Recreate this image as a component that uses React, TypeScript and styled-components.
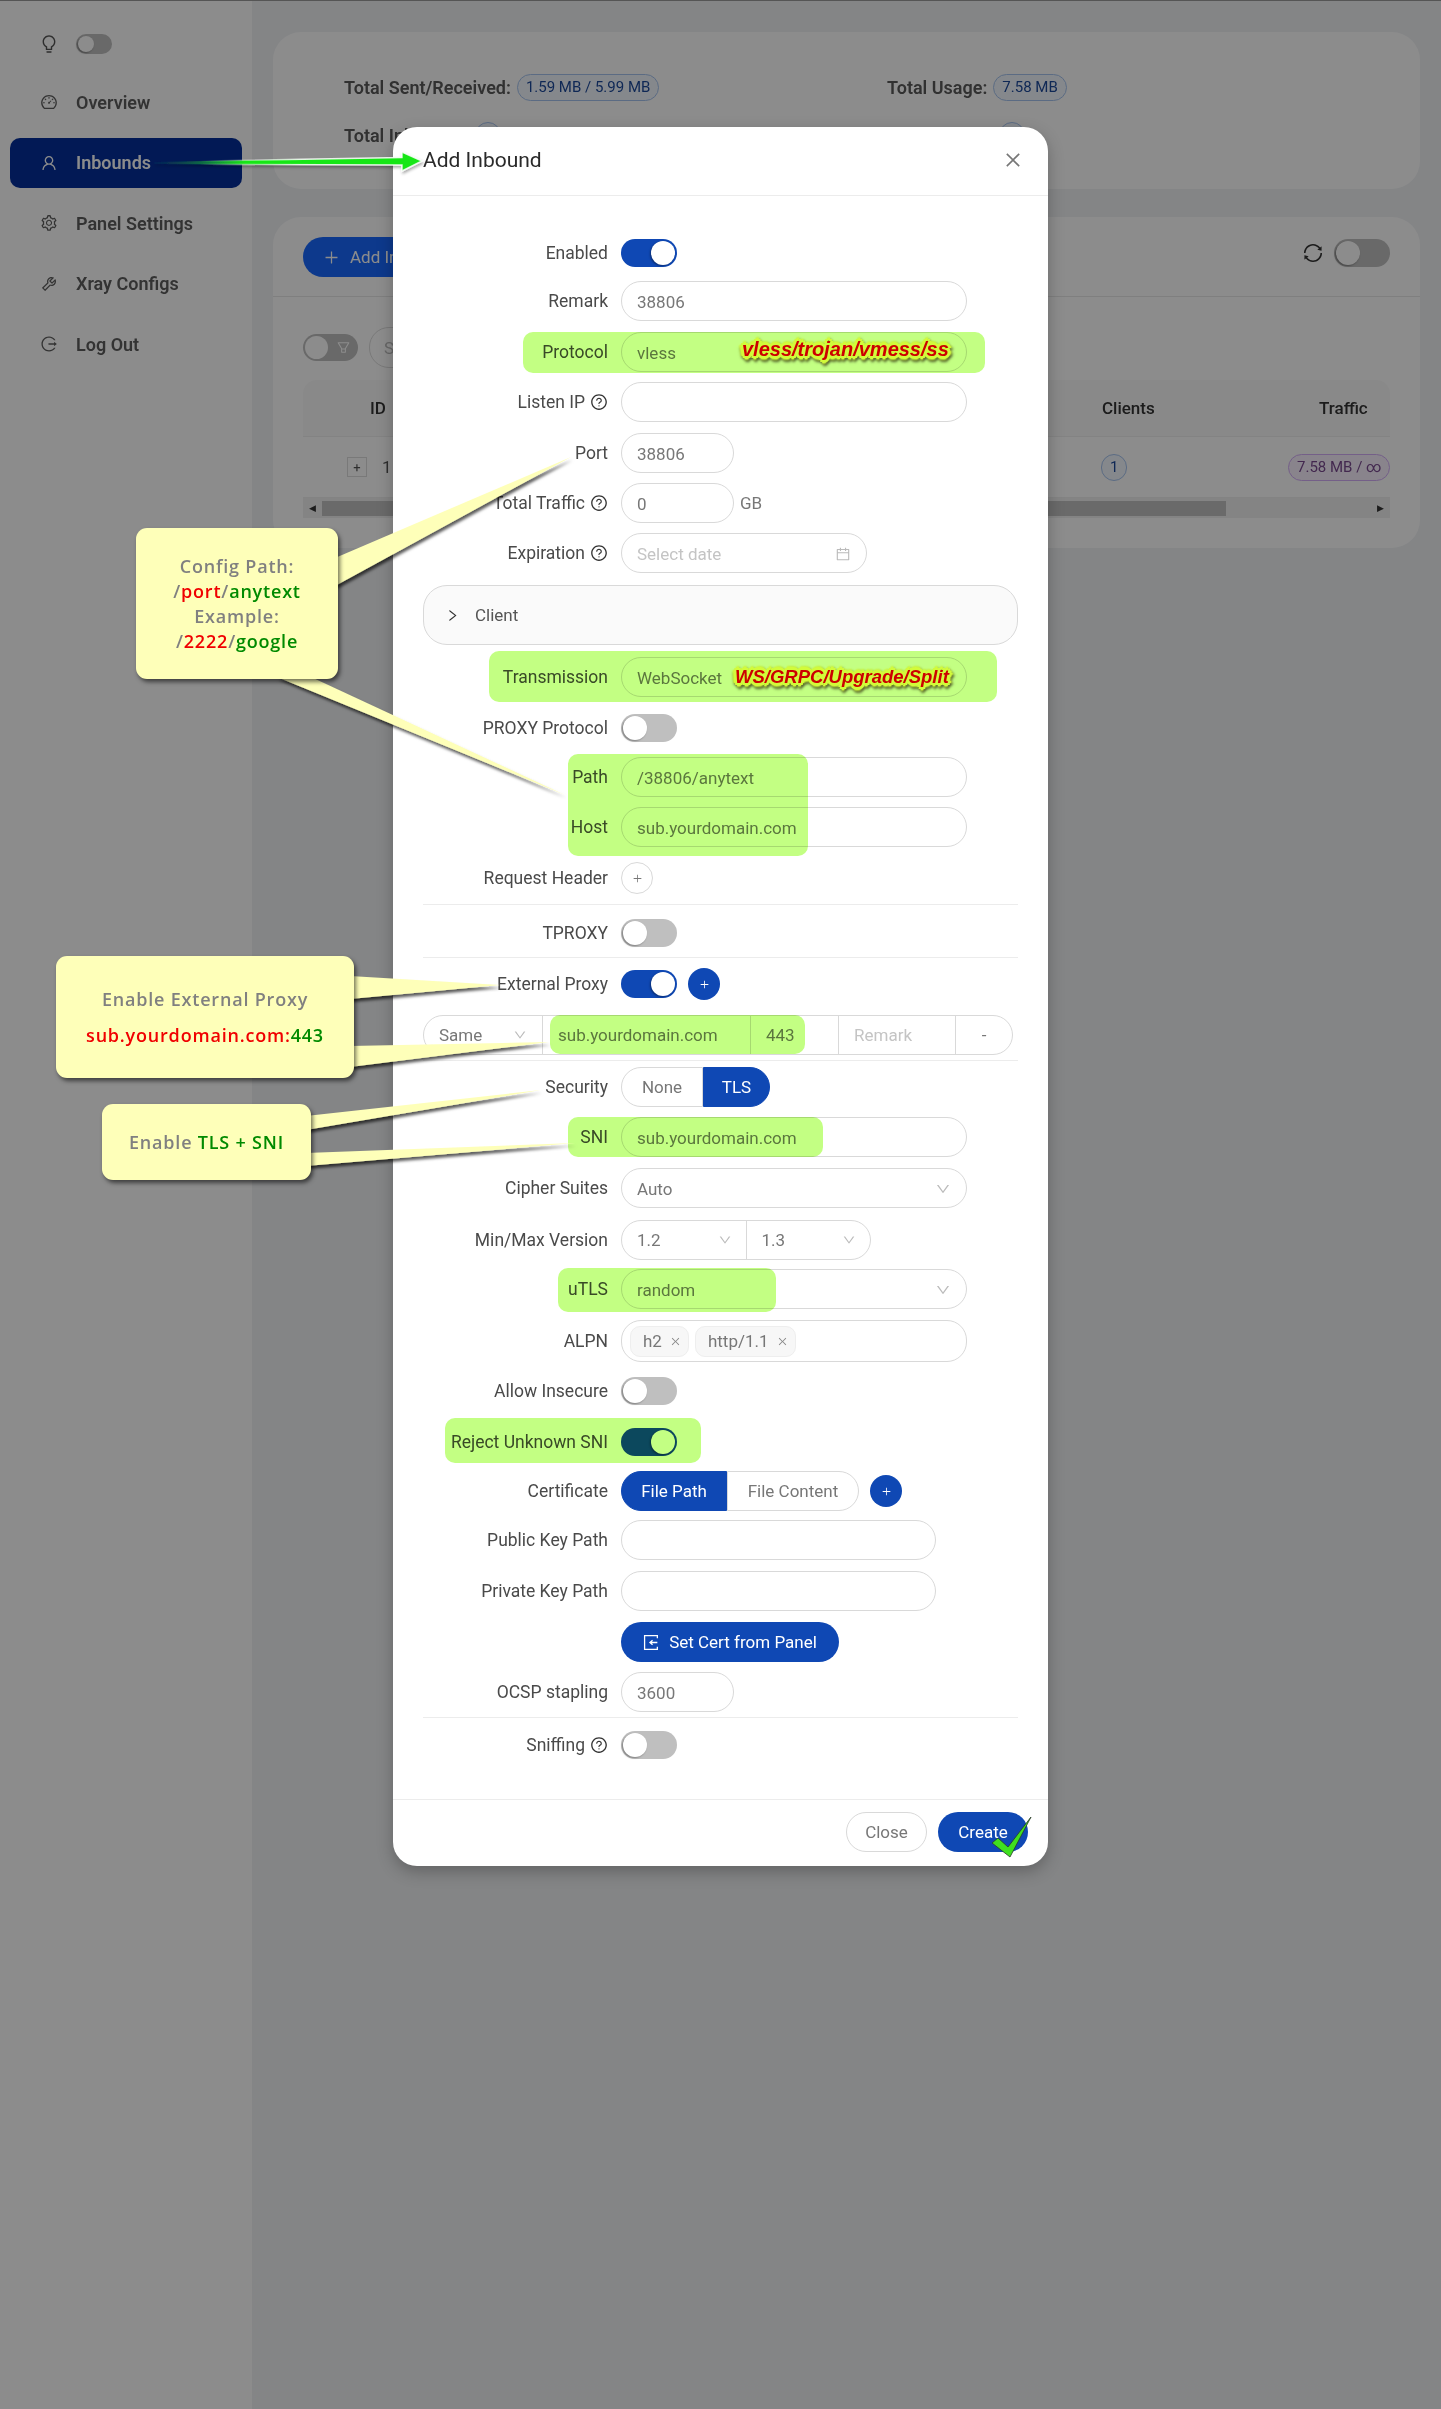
import React from "react";
import styled, { createGlobalStyle } from "styled-components";
import {
  AiOutlineBulb, AiOutlineDashboard, AiOutlineUser, AiOutlineSetting, AiOutlineTool, AiOutlineLogout,
  AiOutlineQuestionCircle, AiOutlineCalendar, AiOutlineSync, AiOutlineClose, AiOutlineDown, AiOutlineRight,
  AiOutlinePlus, AiOutlineFilter,
} from "react-icons/ai";

const FONT = `Roboto, "Open Sans", sans-serif`;

const Global = createGlobalStyle`
  html, body { margin: 0; padding: 0; background: #f0f2f5; }
  body { font-family: ${FONT}; font-size: 17px; }
  * { box-sizing: border-box; }
`;

const Shell = styled.div`
  position: relative; width: 1441px; height: 2409px; overflow: hidden;
  display: grid; grid-template-columns: 252px 1fr; background: #f0f2f5;
`;
const Sidebar = styled.aside`
  background: #fff; padding: 34px 10px 0 10px; display: flex; flex-direction: column;
`;
const ThemeRow = styled.div`
  display: flex; align-items: center; gap: 17px; padding-left: 29px; height: 20px; margin-bottom: 23px; color: #555;
  svg { font-size: 20px; }
`;
const MenuItem = styled.div<{ $active?: boolean }>`
  height: 50px; margin-bottom: 10.5px; border-radius: 10px; display: flex; align-items: center; gap: 18px; padding-left: 30px;
  font-weight: 600; font-size: 18px; color: ${(p) => (p.$active ? "#fff" : "#5e5e5e")};
  background: ${(p) => (p.$active ? "#042f9b" : "transparent")};
  svg { font-size: 18px; flex: none; }
`;
const Main = styled.main`
  padding: 32px 21px 0; display: flex; flex-direction: column; gap: 28px;
`;
const Card = styled.section<{ $h: number }>`
  background: #fff; border-radius: 28px; height: ${(p) => p.$h}px;
`;
const Stats = styled.div`
  display: grid; grid-template-columns: 543px 1fr; grid-template-rows: 48px 48px; padding: 31px 0 0 71px;
`;
const Stat = styled.div`
  display: flex; align-items: center; gap: 6px; font-weight: 600; font-size: 18px; color: #5a5a5a; height: 48px;
`;
const Pill = styled.span<{ $tone?: "blue" | "purple" }>`
  display: inline-flex; align-items: center; justify-content: center; height: 27px; padding: 0 8px; border-radius: 14px;
  font-size: 15px; font-weight: 400; white-space: nowrap;
  color: ${(p) => (p.$tone === "purple" ? "#7a4a90" : "#1d4a9c")};
  background: ${(p) => (p.$tone === "purple" ? "#f9f0ff" : "#f2f7ff")};
  border: 1px solid ${(p) => (p.$tone === "purple" ? "#d3adf7" : "#a6c4ef")};
`;
const ListHead = styled.div`
  height: 80px; border-bottom: 1px solid #e8e8e8; padding: 20px 30px 0; display: flex; justify-content: space-between;
`;
const AddBtn = styled.div`
  height: 40px; width: 220px; border-radius: 20px; background: #1869ff; color: #fff; display: flex; align-items: center;
  gap: 10px; padding-left: 20px; font-size: 17px;
`;
const ListTools = styled.div`
  display: flex; align-items: center; gap: 10px; height: 32px; color: #333; margin-right: 0;
  svg { font-size: 22px; }
`;
const FilterRow = styled.div`
  display: flex; align-items: center; gap: 11px; padding: 30px 30px 0; height: 71px;
`;
const SearchBox = styled.div`
  width: 300px; height: 41px; border: 1px solid #ddd; border-radius: 20px; padding: 0 14px; display: flex; align-items: center;
  color: #bbb; font-size: 17px;
`;
const FilterToggle = styled.div`
  width: 55px; height: 27px; border-radius: 14px; background: #bfbfbf; position: relative; color: #fff;
  display: flex; align-items: center; justify-content: flex-end; padding-right: 7px;
  &::before { content: ""; position: absolute; left: 2px; top: 2px; width: 23px; height: 23px; border-radius: 50%; background: #fff; }
  svg { font-size: 15px; }
`;
const TableWrap = styled.div`
  margin: 12px 30px 0 30px;
`;
const THead = styled.div`
  display: grid; grid-template-columns: 799px 217px 71px; height: 57px; background: #fafafa; align-items: center;
  border-bottom: 1px solid #eee; border-radius: 14px 14px 0 0; font-size: 17px; font-weight: 500; color: #333;
  span:first-child { padding-left: 67px; }
`;
const TRow = styled.div`
  display: grid; grid-template-columns: 798px 187px 102px; height: 61px; align-items: center; color: #555; font-size: 17px;
  border-bottom: 1px solid #eee;
`;
const ExpandCell = styled.div`
  display: flex; align-items: center; gap: 15px; padding-left: 44px;
`;
const ExpandBox = styled.span`
  width: 20px; height: 20px; border: 1px solid #ddd; display: flex; align-items: center; justify-content: center; font-size: 13px;
`;
const ScrollBar = styled.div`
  height: 20px; background: #f1f1f1; display: flex; align-items: center; justify-content: space-between; padding: 0 6px; position: relative; color: #333; font-size: 9px;
`;
const ScrollThumb = styled.div`
  position: absolute; left: 19px; top: 3px; height: 15px; width: 904px; background: #c1c1c1;
`;

const Scrim = styled.div`
  position: absolute; inset: 0; background: rgba(0, 0, 0, 0.45);
`;
const TopLine = styled.div`
  position: absolute; left: 0; right: 0; top: 0; height: 1px; background: #555;
`;
const Modal = styled.div`
  position: absolute; left: 393px; top: 127px; width: 655px; height: 1739px; background: #fff; border-radius: 24px;
  box-shadow: 0 6px 16px rgba(0, 0, 0, 0.25); color: #444;
`;
const ModalHead = styled.header`
  height: 69px; border-bottom: 1px solid #ececec; display: flex; align-items: center; justify-content: space-between; padding: 0 25px 2px 30px;
  color: #2a2a2a; font-size: 21px; font-weight: 400;
  svg { font-size: 20px; color: #777; }
`;
const ModalBody = styled.div`
  height: 1604px; border-bottom: 1px solid #ececec; padding: 37px 30px 0; 
`;
const Row = styled.div<{ $mt?: number; $h?: number }>`
  display: flex; align-items: center; height: ${(p) => p.$h ?? 40}px; margin-top: ${(p) => p.$mt ?? 0}px;
`;
const Label = styled.label`
  width: 185px; flex: none; display: flex; align-items: center; justify-content: flex-end; gap: 5px; margin-right: 13px;
  font-size: 17.5px; color: #4a4a4a; white-space: nowrap;
  svg { font-size: 18px; color: #333; }
`;
const Input = styled.div<{ $w?: number; $ph?: boolean }>`
  width: ${(p) => p.$w ?? 346}px; height: 40px; flex: none; border: 1px solid #d9d9d9; border-radius: 20px; padding: 1px 15px 0;
  display: flex; align-items: center; justify-content: space-between; font-size: 17px; background: #fff;
  color: ${(p) => (p.$ph ? "#c4c4c4" : "#777")};
  svg { font-size: 16px; color: #bbb; }
`;
const Chevron = styled(AiOutlineDown)`
  font-size: 14px; color: #bbb;
`;
const Suffix = styled.span`
  margin-left: 6px; color: #777; font-size: 17px;
`;
const Toggle = styled.span<{ $on?: boolean; $small?: boolean }>`
  display: inline-block; position: relative; flex: none; border-radius: 14px;
  width: ${(p) => (p.$small ? 36 : 56)}px; height: ${(p) => (p.$small ? 20 : 28)}px;
  background: ${(p) => (p.$on ? "#0f48b4" : "#bfbfbf")};
  &::after {
    content: ""; position: absolute; top: 2px; border-radius: 50%; background: #fff; box-shadow: -1px 1px 2px rgba(0,0,0,.35);
    width: ${(p) => (p.$small ? 16 : 24)}px; height: ${(p) => (p.$small ? 16 : 24)}px;
    left: ${(p) => (p.$on ? (p.$small ? 18 : 30) : 2)}px;
  }
`;
const Collapse = styled.div`
  height: 60px; margin-top: 12px; border: 1px solid #d9d9d9; border-radius: 24px; background: #fafafa; display: flex; align-items: center;
  gap: 15px; padding-left: 21px; font-size: 17px; color: #555;
  svg { font-size: 15px; color: #333; }
`;
const Divider = styled.hr<{ $mt: number }>`
  border: 0; height: 1px; background: #ececec; margin: ${(p) => p.$mt}px 0 0;
`;
const RoundAdd = styled.span<{ $solid?: boolean }>`
  width: 32px; height: 32px; flex: none; border-radius: 50%; display: flex; align-items: center; justify-content: center;
  background: ${(p) => (p.$solid ? "#0f48b4" : "#fff")}; color: ${(p) => (p.$solid ? "#fff" : "#777")};
  border: ${(p) => (p.$solid ? "0" : "1px solid #d9d9d9")}; margin-left: ${(p) => (p.$solid ? 11 : 0)}px;
  svg { font-size: 11px; }
`;
const ProxyGroup = styled.div`
  width: 590px; height: 40px; margin-top: 11px; border: 1px solid #d9d9d9; border-radius: 20px; display: flex; font-size: 17px; color: #777;
`;
const ProxyCell = styled.div<{ $w: number; $ph?: boolean; $center?: boolean }>`
  width: ${(p) => p.$w}px; flex: none; display: flex; align-items: center; justify-content: ${(p) => (p.$center ? "center" : "space-between")};
  padding: 0 15px; color: ${(p) => (p.$ph ? "#c4c4c4" : "#777")};
  & + & { border-left: 1px solid #d9d9d9; }
`;
const Radios = styled.div`
  display: flex; height: 40px; flex: none;
`;
const Radio = styled.div<{ $on?: boolean; $w: number; $pos: "l" | "r" }>`
  width: ${(p) => p.$w}px; display: flex; align-items: center; justify-content: center; font-size: 17px;
  border: 1px solid ${(p) => (p.$on ? "#0f48b4" : "#d9d9d9")};
  border-radius: ${(p) => (p.$pos === "l" ? "20px 0 0 20px" : "0 20px 20px 0")};
  background: ${(p) => (p.$on ? "#0f48b4" : "#fff")}; color: ${(p) => (p.$on ? "#fff" : "#777")};
`;
const VersionGroup = styled.div`
  width: 250px; height: 40px; border: 1px solid #d9d9d9; border-radius: 20px; display: flex; font-size: 17px; color: #777;
`;
const VersionCell = styled.div`
  flex: 1; display: flex; align-items: center; justify-content: space-between; padding: 0 14px 0 15px;
  & + & { border-left: 1px solid #d9d9d9; }
`;
const TagBox = styled.div`
  width: 346px; height: 42px; border: 1px solid #d9d9d9; border-radius: 20px; display: flex; align-items: center; gap: 6px; padding-left: 8px;
`;
const Tag = styled.span`
  height: 31px; padding: 0 7px 0 12px; border: 1px solid #eee; border-radius: 10px; background: #f7f7f7; display: flex; align-items: center; gap: 8px;
  font-size: 17px; color: #777;
  svg { font-size: 11px; color: #888; }
`;
const PrimaryBtn = styled.div<{ $w: number }>`
  width: ${(p) => p.$w}px; height: 40px; border-radius: 20px; background: #0f48b4; color: #fff; display: flex; align-items: center; justify-content: center; gap: 9px; font-size: 17px;
  svg { width: 17px; height: 17px; }
`;
const GhostBtn = styled.div`
  width: 81px; height: 40px; border-radius: 20px; border: 1px solid #d9d9d9; color: #777; display: flex; align-items: center; justify-content: center; font-size: 17px;
`;
const Spacer = styled.div`
  width: 198px; flex: none;
`;
const ModalFoot = styled.footer`
  display: flex; justify-content: flex-end; gap: 11px; padding: 12px 20px 0 0;
`;

/* Marker highlights and call-outs drawn on top of the screenshot */
const Marker = styled.div<{ $x: number; $y: number; $w: number; $h: number }>`
  position: absolute; left: ${(p) => p.$x}px; top: ${(p) => p.$y}px; width: ${(p) => p.$w}px; height: ${(p) => p.$h}px;
  background: #c3ff83; mix-blend-mode: multiply; border-radius: 10px;
`;
const Glow = styled.div<{ $x: number; $y: number; $size: number }>`
  position: absolute; left: ${(p) => p.$x}px; top: ${(p) => p.$y}px; font-family: "Liberation Sans", Arial, sans-serif; font-weight: 700; font-style: italic;
  font-size: ${(p) => p.$size}px; line-height: 24px; color: #cc0000; white-space: nowrap;
  filter: drop-shadow(1px 2px 1px rgba(50, 50, 20, 0.8));
  text-shadow: -3px 0 #d2fb3a, 3px 0 #d2fb3a, 0 -3px #d2fb3a, 0 3px #d2fb3a, -2px -2px #d2fb3a, 2px -2px #d2fb3a, -2px 2px #d2fb3a, 2px 2px #d2fb3a,
    -4px 0 2px #d2fb3a, 4px 0 2px #d2fb3a, 0 -4px 2px #d2fb3a, 0 4px 2px #d2fb3a;
`;
const Ink = styled.svg`
  position: absolute; left: 0; top: 0; width: 1441px; height: 2409px; pointer-events: none;
`;
const Bubble = styled.div<{ $x: number; $y: number; $w: number; $h: number }>`
  position: absolute; left: ${(p) => p.$x}px; top: ${(p) => p.$y}px; width: ${(p) => p.$w}px; height: ${(p) => p.$h}px;
  background: #feffb9; border-radius: 11px; box-shadow: 2px 3px 4px rgba(0, 0, 0, 0.55);
  display: flex; flex-direction: column; align-items: center; justify-content: center;
  font-family: "Open Sans", sans-serif; font-weight: 600; font-size: 18px; letter-spacing: 0.8px; color: #808080; text-align: center;
`;
const BubbleLine = styled.div<{ $lh?: number }>`
  line-height: ${(p) => p.$lh ?? 25}px; white-space: nowrap;
`;
const Red = styled.span`color: #f00000;`;
const Green = styled.span`color: #008a00;`;

const Help = () => <AiOutlineQuestionCircle />;

const ImportIcon = () => (
  <svg viewBox="0 0 16 16" fill="none" stroke="currentColor" strokeWidth="1.2">
    <path d="M13.5 4V1.5H1.5v13h12V12" />
    <path d="M13.5 8H6.5M9 5.8 6.5 8 9 10.2" />
  </svg>
);

const Tails = () => (
  <Ink viewBox="0 0 1441 2409">
    <defs>
      <filter id="ts" x="-10%" y="-30%" width="120%" height="180%">
        <feDropShadow dx="1.5" dy="3" stdDeviation="1.5" floodColor="#000" floodOpacity="0.65" />
      </filter>
      <filter id="as" x="-5%" y="-60%" width="110%" height="220%">
        <feDropShadow dx="1" dy="2" stdDeviation="1.5" floodColor="#000" floodOpacity="0.35" />
      </filter>
      <linearGradient id="arrowG" gradientUnits="userSpaceOnUse" x1="154" y1="0" x2="245" y2="0">
        <stop offset="0" stopColor="#0a2a5a" stopOpacity="0.4" />
        <stop offset="0.6" stopColor="#107a40" />
        <stop offset="1" stopColor="#14e614" />
      </linearGradient>
      <linearGradient id="arrowS" gradientUnits="userSpaceOnUse" x1="200" y1="0" x2="300" y2="0">
        <stop offset="0" stopColor="#fff" stopOpacity="0" />
        <stop offset="1" stopColor="#fff" stopOpacity="0.85" />
      </linearGradient>
    </defs>
    <g fill="#feffb9" filter="url(#ts)">
      <polygon points="335,558 571,457 335,586" />
      <polygon points="277,677 565,795 311,677" />
      <polygon points="350,976 500,985 350,999" />
      <polygon points="350,1046 549,1042 350,1067" />
      <polygon points="306,1116 541,1090 306,1130" />
      <polygon points="306,1153 575,1143 306,1166" />
    </g>
    <polygon filter="url(#as)" points="154,162 402,157.5 402,152 422,161 402,171 402,165 154,164" fill="url(#arrowG)" stroke="url(#arrowS)" strokeWidth="1.4" />
    <polygon points="992,1843 998,1838 1008,1847 1031,1817 1010,1857" fill="#3fe01f" stroke="#2a3a2a" strokeWidth="0.8" />
  </Ink>
);

export default function App() {
  return (
    <>
      <Global />
      <Shell>
        <Sidebar>
          <ThemeRow><AiOutlineBulb /><Toggle $small /></ThemeRow>
          <MenuItem><AiOutlineDashboard />Overview</MenuItem>
          <MenuItem $active><AiOutlineUser />Inbounds</MenuItem>
          <MenuItem><AiOutlineSetting />Panel Settings</MenuItem>
          <MenuItem><AiOutlineTool />Xray Configs</MenuItem>
          <MenuItem><AiOutlineLogout />Log Out</MenuItem>
        </Sidebar>
        <Main>
          <Card $h={157}>
            <Stats>
              <Stat>Total Sent/Received:<Pill>1.59 MB / 5.99 MB</Pill></Stat>
              <Stat>Total Usage:<Pill>7.58 MB</Pill></Stat>
              <Stat>Total Inbounds:<Pill>1</Pill></Stat>
              <Stat>Total Clients:<Pill>1</Pill></Stat>
            </Stats>
          </Card>
          <Card $h={331}>
            <ListHead>
              <AddBtn><AiOutlinePlus />Add Inbound</AddBtn>
              <ListTools><AiOutlineSync /><Toggle /></ListTools>
            </ListHead>
            <FilterRow>
              <FilterToggle><AiOutlineFilter /></FilterToggle>
              <SearchBox>Search</SearchBox>
            </FilterRow>
            <TableWrap>
              <THead><span>ID</span><span>Clients</span><span>Traffic</span></THead>
              <TRow>
                <ExpandCell><ExpandBox>+</ExpandBox>1</ExpandCell>
                <div><Pill>1</Pill></div>
                <div><Pill $tone="purple">7.58 MB / ∞</Pill></div>
              </TRow>
              <ScrollBar><span>◀</span><ScrollThumb /><span>▶</span></ScrollBar>
            </TableWrap>
          </Card>
        </Main>
        <Scrim />
        <TopLine />
        <Modal>
          <ModalHead>Add Inbound<AiOutlineClose /></ModalHead>
          <ModalBody>
            <Row><Label>Enabled</Label><Toggle $on /></Row>
            <Row $mt={8}><Label>Remark</Label><Input>38806</Input></Row>
            <Row $mt={11}><Label>Protocol</Label><Input>vless</Input></Row>
            <Row $mt={10}><Label>Listen IP<Help /></Label><Input /></Row>
            <Row $mt={11}><Label>Port</Label><Input $w={113}>38806</Input></Row>
            <Row $mt={10}><Label>Total Traffic<Help /></Label><Input $w={113}>0</Input><Suffix>GB</Suffix></Row>
            <Row $mt={10}><Label>Expiration<Help /></Label><Input $w={246} $ph>Select date<AiOutlineCalendar /></Input></Row>
            <Collapse><AiOutlineRight />Client</Collapse>
            <Row $mt={12}><Label>Transmission</Label><Input>WebSocket</Input></Row>
            <Row $mt={11}><Label>PROXY Protocol</Label><Toggle /></Row>
            <Row $mt={9}><Label>Path</Label><Input>/38806/anytext</Input></Row>
            <Row $mt={10}><Label>Host</Label><Input>sub.yourdomain.com</Input></Row>
            <Row $mt={11}><Label>Request Header</Label><RoundAdd><AiOutlinePlus /></RoundAdd></Row>
            <Divider $mt={6} />
            <Row $mt={8}><Label>TPROXY</Label><Toggle /></Row>
            <Divider $mt={4} />
            <Row $mt={6}><Label>External Proxy</Label><Toggle $on /><RoundAdd $solid><AiOutlinePlus /></RoundAdd></Row>
            <ProxyGroup>
              <ProxyCell $w={118}>Same<Chevron /></ProxyCell>
              <ProxyCell $w={208}>sub.yourdomain.com</ProxyCell>
              <ProxyCell $w={88}>443</ProxyCell>
              <ProxyCell $w={117} $ph>Remark</ProxyCell>
              <ProxyCell $w={57} $center>-</ProxyCell>
            </ProxyGroup>
            <Divider $mt={5} />
            <Row $mt={6}><Label>Security</Label><Radios><Radio $w={82} $pos="l">None</Radio><Radio $w={67} $pos="r" $on>TLS</Radio></Radios></Row>
            <Row $mt={10}><Label>SNI</Label><Input>sub.yourdomain.com</Input></Row>
            <Row $mt={11}><Label>Cipher Suites</Label><Input>Auto<Chevron /></Input></Row>
            <Row $mt={12}><Label>Min/Max Version</Label><VersionGroup><VersionCell>1.2<Chevron /></VersionCell><VersionCell>1.3<Chevron /></VersionCell></VersionGroup></Row>
            <Row $mt={9}><Label>uTLS</Label><Input>random<Chevron /></Input></Row>
            <Row $mt={11} $h={42}><Label>ALPN</Label><TagBox><Tag>h2<AiOutlineClose /></Tag><Tag>http/1.1<AiOutlineClose /></Tag></TagBox></Row>
            <Row $mt={9}><Label>Allow Insecure</Label><Toggle /></Row>
            <Row $mt={11}><Label>Reject Unknown SNI</Label><Toggle $on /></Row>
            <Row $mt={9}><Label>Certificate</Label><Radios><Radio $w={106} $pos="l" $on>File Path</Radio><Radio $w={132} $pos="r">File Content</Radio></Radios><RoundAdd $solid><AiOutlinePlus /></RoundAdd></Row>
            <Row $mt={9}><Label>Public Key Path</Label><Input $w={315} /></Row>
            <Row $mt={11}><Label>Private Key Path</Label><Input $w={315} /></Row>
            <Row $mt={11}><Spacer /><PrimaryBtn $w={218}><ImportIcon />Set Cert from Panel</PrimaryBtn></Row>
            <Row $mt={10}><Label>OCSP stapling</Label><Input $w={113}>3600</Input></Row>
            <Divider $mt={5} />
            <Row $mt={7}><Label>Sniffing<Help /></Label><Toggle /></Row>
          </ModalBody>
          <ModalFoot><GhostBtn>Close</GhostBtn><PrimaryBtn $w={90}>Create</PrimaryBtn></ModalFoot>
        </Modal>
        <Marker $x={523} $y={332} $w={462} $h={41} />
        <Marker $x={489} $y={651} $w={508} $h={51} />
        <Marker $x={568} $y={754} $w={240} $h={102} />
        <Marker $x={550} $y={1015} $w={255} $h={39} />
        <Marker $x={568} $y={1117} $w={255} $h={40} />
        <Marker $x={558} $y={1268} $w={218} $h={44} />
        <Marker $x={445} $y={1418} $w={256} $h={45} />
        <Glow $x={742} $y={337} $size={20}>vless/trojan/vmess/ss</Glow>
        <Glow $x={735} $y={665} $size={18.5}>WS/GRPC/Upgrade/Split</Glow>
        <Tails />
        <Bubble $x={136} $y={528} $w={202} $h={151}>
          <BubbleLine>Config Path:</BubbleLine>
          <BubbleLine>/<Red>port</Red>/<Green>anytext</Green></BubbleLine>
          <BubbleLine>Example:</BubbleLine>
          <BubbleLine>/<Red>2222</Red>/<Green>google</Green></BubbleLine>
        </Bubble>
        <Bubble $x={56} $y={956} $w={298} $h={122}>
          <BubbleLine $lh={36}>Enable External Proxy</BubbleLine>
          <BubbleLine $lh={36}><Red>sub.yourdomain.com:</Red><Green>443</Green></BubbleLine>
        </Bubble>
        <Bubble $x={102} $y={1104} $w={209} $h={76}>
          <BubbleLine>Enable <Green>TLS + SNI</Green></BubbleLine>
        </Bubble>
      </Shell>
    </>
  );
}
